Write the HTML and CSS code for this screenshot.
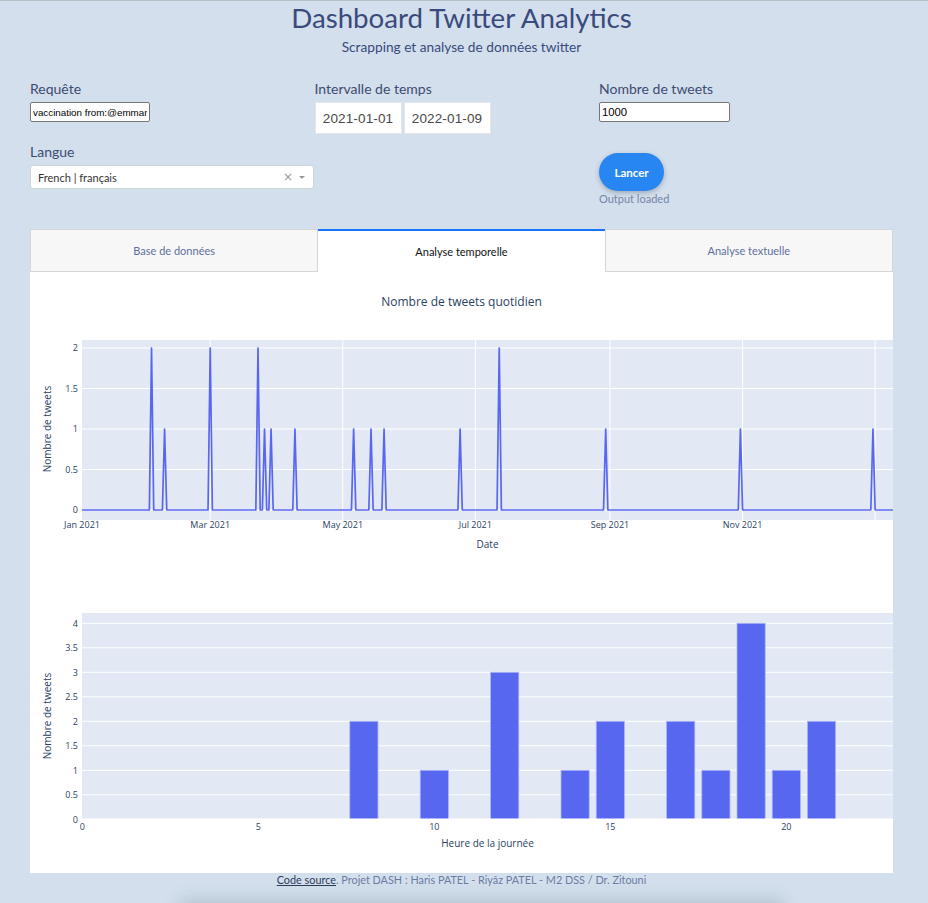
FILE: index.html
```html
<!DOCTYPE html>
<html lang="fr">
<head>
<meta charset="utf-8">
<title>Dashboard Twitter Analytics</title>
<link rel="stylesheet" href="styles.css">
</head>
<body>
<div class="page">
  <header class="header">
    <h1 class="title">Dashboard Twitter Analytics</h1>
    <p class="subtitle">Scrapping et analyse de données twitter</p>
  </header>

  <section class="controls">
    <div class="field">
      <label class="label">Requête</label>
      <input class="text-input query" type="text" value="vaccination from:@emmanuelmacron">
    </div>
    <div class="field">
      <label class="label">Intervalle de temps</label>
      <div class="daterange">
        <div class="dateinput">2021-01-01</div>
        <div class="dateinput">2022-01-09</div>
      </div>
    </div>
    <div class="field">
      <label class="label">Nombre de tweets</label>
      <input class="text-input count" type="text" value="1000">
    </div>
    <div class="field">
      <label class="label">Langue</label>
      <div class="select">
        <span class="select-value">French | français</span>
        <span class="select-clear">×</span>
        <span class="select-caret"></span>
      </div>
    </div>
    <div class="field"></div>
    <div class="field launch">
      <button class="btn">Lancer</button>
      <span class="status">Output loaded</span>
    </div>
  </section>

  <section class="tabs-wrap">
    <div class="tabs">
      <div class="tab">Base de données</div>
      <div class="tab active">Analyse temporelle</div>
      <div class="tab">Analyse textuelle</div>
    </div>
    <div class="panel">
      <svg class="chart" width="863" height="290" viewBox="0 0 863 290">
        <text class="ctitle" x="431.5" y="33.5" text-anchor="middle">Nombre de tweets quotidien</text>
        <rect x="52" y="68" width="811" height="180" class="plotbg"/>
        <g class="grid">
          <line x1="180.2" y1="68" x2="180.2" y2="248"/>
          <line x1="312.8" y1="68" x2="312.8" y2="248"/>
          <line x1="445.3" y1="68" x2="445.3" y2="248"/>
          <line x1="580" y1="68" x2="580" y2="248"/>
          <line x1="712.6" y1="68" x2="712.6" y2="248"/>
          <line x1="845.1" y1="68" x2="845.1" y2="248"/>
          <line x1="52" y1="76" x2="863" y2="76"/>
          <line x1="52" y1="116.5" x2="863" y2="116.5"/>
          <line x1="52" y1="157" x2="863" y2="157"/>
          <line x1="52" y1="197.5" x2="863" y2="197.5"/>
          <line x1="52" y1="238" x2="863" y2="238" class="zero"/>
        </g>
        <polyline class="series" points="52,238 119.36,238 121.54,76 123.71,238 132.4,238 134.57,157 136.75,238 178.03,238 180.21,76 182.38,238 225.84,238 228.01,76 230.19,238 232.36,238 234.53,157 236.71,238 238.88,238 241.05,157 243.22,238 262.78,238 264.95,157 267.13,238 321.45,238 323.63,157 325.8,238 338.84,238 341.01,157 343.18,238 351.87,238 354.05,157 356.22,238 427.93,238 430.1,157 432.28,238 467.04,238 469.22,76 471.39,238 573.52,238 575.69,157 577.87,238 708.25,238 710.42,157 712.59,238 840.8,238 842.97,157 845.15,238 863,238"/>
        <g class="tick" text-anchor="end">
          <text x="48" y="79.2">2</text>
          <text x="48" y="119.7">1.5</text>
          <text x="48" y="160.2">1</text>
          <text x="48" y="200.7">0.5</text>
          <text x="48" y="241.2">0</text>
        </g>
        <g class="tick" text-anchor="middle">
          <text x="52" y="255.5">Jan 2021</text>
          <text x="180.2" y="255.5">Mar 2021</text>
          <text x="312.8" y="255.5">May 2021</text>
          <text x="445.3" y="255.5">Jul 2021</text>
          <text x="580" y="255.5">Sep 2021</text>
          <text x="712.6" y="255.5">Nov 2021</text>
        </g>
        <text class="atitle" x="457.5" y="276" text-anchor="middle">Date</text>
        <text class="atitle" text-anchor="middle" transform="translate(21,157) rotate(-90)">Nombre de tweets</text>
      </svg>

      <svg class="chart" width="863" height="311" viewBox="0 0 863 311">
        <rect x="52" y="51" width="811" height="206.3" class="plotbg"/>
        <g class="grid">
          <line x1="52" y1="61.3" x2="863" y2="61.3"/>
          <line x1="52" y1="85.8" x2="863" y2="85.8"/>
          <line x1="52" y1="110.3" x2="863" y2="110.3"/>
          <line x1="52" y1="134.8" x2="863" y2="134.8"/>
          <line x1="52" y1="159.3" x2="863" y2="159.3"/>
          <line x1="52" y1="183.8" x2="863" y2="183.8"/>
          <line x1="52" y1="208.3" x2="863" y2="208.3"/>
          <line x1="52" y1="232.8" x2="863" y2="232.8"/>
        </g>
        <g class="bars">
          <rect x="319.82" y="159.3" width="28.16" height="98"/>
          <rect x="390.22" y="208.3" width="28.16" height="49"/>
          <rect x="460.62" y="110.3" width="28.16" height="147"/>
          <rect x="531.02" y="208.3" width="28.16" height="49"/>
          <rect x="566.22" y="159.3" width="28.16" height="98"/>
          <rect x="636.62" y="159.3" width="28.16" height="98"/>
          <rect x="671.82" y="208.3" width="28.16" height="49"/>
          <rect x="707.02" y="61.3" width="28.16" height="196"/>
          <rect x="742.22" y="208.3" width="28.16" height="49"/>
          <rect x="777.42" y="159.3" width="28.16" height="98"/>
        </g>
        <line class="zeroline" x1="52" y1="257.3" x2="863" y2="257.3"/>
        <g class="tick" text-anchor="end">
          <text x="48" y="64.5">4</text>
          <text x="48" y="89">3.5</text>
          <text x="48" y="113.5">3</text>
          <text x="48" y="138">2.5</text>
          <text x="48" y="162.5">2</text>
          <text x="48" y="187">1.5</text>
          <text x="48" y="211.5">1</text>
          <text x="48" y="236">0.5</text>
          <text x="48" y="260.5">0</text>
        </g>
        <g class="tick" text-anchor="middle">
          <text x="52.3" y="268">0</text>
          <text x="228.3" y="268">5</text>
          <text x="404.3" y="268">10</text>
          <text x="580.3" y="268">15</text>
          <text x="756.3" y="268">20</text>
        </g>
        <text class="atitle" x="457.5" y="285" text-anchor="middle">Heure de la journée</text>
        <text class="atitle" text-anchor="middle" transform="translate(21,154) rotate(-90)">Nombre de tweets</text>
      </svg>
    </div>
  </section>

  <footer class="footer">
    <a class="footer-link" href="#">Code source</a>. Projet DASH : Haris PATEL - Riyâz PATEL - M2 DSS / Dr. Zitouni
  </footer>
  <div class="below"></div>
</div>
</body>
</html>
```
FILE: styles.css
```css
* { box-sizing: border-box; }

html, body {
  margin: 0;
  padding: 0;
}

body {
  background: #d3dfec;
  border-top: 1px solid #b8bec6;
  font-family: "Lato", "Open Sans", sans-serif;
  color: #3b4a74;
  overflow: hidden;
}

.page {
  width: 863px;
  margin-left: 30px;
}

.header {
  text-align: center;
}

.title {
  margin: 0;
  padding-top: 2px;
  font-size: 27.7px;
  font-weight: 400;
  line-height: 30px;
  color: #3a4a7c;
}

.subtitle {
  margin: 6px 0 0;
  font-size: 13.7px;
  line-height: 16px;
  color: #3a4a7c;
}

.controls {
  display: grid;
  grid-template-columns: 284.5px 284.5px 284.5px;
  row-gap: 10px;
  margin-top: 26px;
}

.field {
  display: flex;
  flex-direction: column;
  align-items: flex-start;
}

.label {
  font-size: 14px;
  line-height: 16px;
  color: #3d4b72;
  margin-bottom: 5px;
}

.text-input {
  height: 20px;
  border: 1px solid #767676;
  border-radius: 2px;
  background: #fff;
  padding: 0 2px;
  font-family: "Liberation Sans", Arial, sans-serif;
  color: #000;
  outline: none;
}

.query {
  width: 120px;
  font-size: 9.8px;
}

.count {
  width: 131px;
  font-size: 11.3px;
}

.daterange {
  display: flex;
  gap: 2px;
  height: 32px;
}

.dateinput {
  width: 87px;
  height: 32px;
  background: #fff;
  border: 1px solid #e3e6ea;
  display: flex;
  align-items: center;
  justify-content: center;
  font-family: "Liberation Sans", Arial, sans-serif;
  font-size: 13.5px;
  letter-spacing: 0.15px;
  color: #484848;
}

.select {
  width: 284px;
  height: 24px;
  background: #fff;
  border: 1px solid #cfd4da;
  border-radius: 3px;
  display: flex;
  align-items: center;
  padding: 0 8px 0 7px;
  font-size: 11px;
  color: #333;
}

.select-value { flex: 1; }

.select-clear {
  color: #999;
  font-size: 12px;
  font-family: "DejaVu Sans", sans-serif;
  margin-right: 6px;
  line-height: 1;
}

.select-caret {
  width: 0;
  height: 0;
  border-left: 3px solid transparent;
  border-right: 3px solid transparent;
  border-top: 3px solid #999;
}

.launch {
  padding-top: 9px;
}

.btn {
  width: 65px;
  height: 38px;
  border: none;
  border-radius: 19px;
  background: #2786f2;
  color: #fff;
  font-family: "Lato", sans-serif;
  font-weight: 700;
  font-size: 11.5px;
  box-shadow: 0 2px 5px rgba(40, 50, 80, 0.3);
  cursor: pointer;
}

.status {
  margin-top: 1px;
  font-size: 11px;
  line-height: 14px;
  color: #7584aa;
}

.tabs-wrap {
  margin-top: 23px;
}

.tabs {
  display: flex;
  height: 43px;
}

.tab {
  flex: 1;
  display: flex;
  align-items: center;
  justify-content: center;
  background: #f7f7f7;
  border: 1px solid #d6d6d6;
  font-size: 11px;
  color: #6070a0;
}

.tab.active {
  background: #fff;
  border-top: 2px solid #1975fa;
  border-bottom: none;
  border-left: none;
  border-right: none;
  color: #111;
}

.panel {
  background: #fff;
  height: 601px;
  display: flex;
  flex-direction: column;
  overflow: hidden;
}

.chart {
  display: block;
  font-family: "Open Sans", sans-serif;
}

.plotbg { fill: #e2e9f4; }

.grid line {
  stroke: #fff;
  stroke-width: 1;
}

.grid line.zero { stroke-width: 1.5; }

.zeroline {
  stroke: #fff;
  stroke-width: 1.5;
}

.series {
  fill: none;
  stroke: #5967f0;
  stroke-width: 1.7;
  stroke-linejoin: round;
}

.bars rect {
  fill: #5867f0;
  stroke: #aab3f5;
  stroke-width: 0.8;
}

.tick text {
  font-size: 9px;
  fill: #2a3f5f;
}

.ctitle {
  font-size: 12px;
  fill: #2a3f5f;
}

.atitle {
  font-size: 10px;
  fill: #2a3f5f;
}

.footer {
  text-align: center;
  font-size: 10.85px;
  line-height: 14px;
  padding-top: 0;
  color: #6c7aa4;
}

.footer-link {
  color: #2c3a5a;
  text-decoration: underline;
}

.below {
  height: 60px;
  margin: 16px 110px 0 150px;
  background: #d3dfec;
  box-shadow: 0 -3px 16px rgba(60, 80, 110, 0.22);
}
```
